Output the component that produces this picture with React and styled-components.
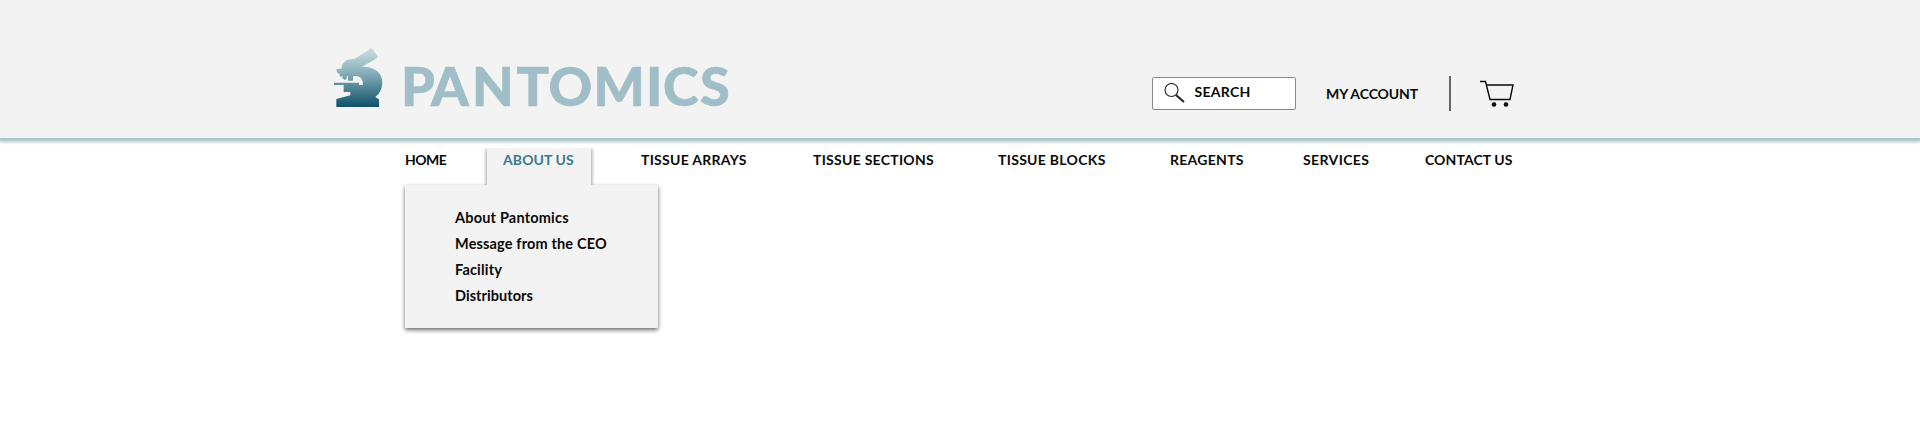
import React from "react";
import styled, { createGlobalStyle } from "styled-components";

const GlobalStyle = createGlobalStyle`
  body { margin: 0; min-height: 100vh; background: #fff; color: #0a0a0a; font-family: Lato, "Liberation Sans", sans-serif; font-size: 14px; font-weight: 700; }
  * { box-sizing: border-box; }
`;
const Header = styled.header`
  height: 138px;
  display: flex;
  align-items: flex-start;
  padding: 36px 0 0 320px;
  background: #f3f3f3;
  box-shadow: 0 2px 0 #a9c6cf, 0 3px 3px 1px #a9c6cf;
`;
const Logo = styled.svg`
  width: 420px;
  height: 80px;
  flex: none;
  overflow: visible;
`;
const Wordmark = styled.text`
  font: 900 54px Lato, sans-serif;
  fill: #a0bec8;
  stroke: #a0bec8;
  stroke-width: 0.6px;
`;
const Label = styled.span`
  display: block;
  white-space: nowrap;
  line-height: 18px;
  letter-spacing: ${(p) => p.$track || 0}px;
`;
const SearchBox = styled.div`
  width: 144px;
  height: 33px;
  margin: 41px 0 0 412px;
  padding: 5px 0 0 11px;
  display: flex;
  gap: 8.5px;
  border: 1px solid #8b8b8b;
  border-radius: 2px;
  background: #fff;
`;
const Account = styled.a`
  width: 123px;
  margin: 49px 0 0 30px;
`;
const Divider = styled.div`
  width: 1.5px;
  height: 35px;
  margin-top: 40px;
  background: #666;
`;
const Cart = styled.svg`
  width: 35px;
  height: 28px;
  margin: 44px 0 0 29px;
`;
const Nav = styled.nav`
  display: flex;
  padding: 9px 0 0 405px;
`;
const NavItem = styled.a`
  flex: none;
  height: 38px;
  padding-top: 4px;
  width: ${(p) => p.$width}px;
`;
const ActiveItem = styled(NavItem)`
  margin-right: 50px;
  padding-left: 16px;
  color: #3b7a90;
  background: #f3f3f3;
  border-radius: 2px 2px 0 0;
  box-shadow: 0 1px 4px rgba(0, 0, 0, 0.55);
  clip-path: inset(1px -5px 0 -5px);
`;
const Submenu = styled.div`
  position: relative;
  width: 253px;
  height: 143px;
  margin-left: 405px;
  padding: 24px 0 0 50px;
  display: flex;
  flex-direction: column;
  gap: 8px;
  font-size: 14.5px;
  background: #f3f3f3;
  box-shadow: 0 2px 4px rgba(0, 0, 0, 0.6);
  border-radius: 1px;
  &::before {
    content: "";
    position: absolute;
    left: 82px;
    top: -2px;
    width: 104px;
    height: 4px;
    background: #f3f3f3;
  }
`;

const afterTabs = [
  ["TISSUE ARRAYS", 172, 0.27],
  ["TISSUE SECTIONS", 185, 0.27],
  ["TISSUE BLOCKS", 172, 0.3],
  ["REAGENTS", 133, 0.28],
  ["SERVICES", 122, 0.38],
  ["CONTACT US", 90, 0.08],
];
const links = [
  ["About Pantomics", 0.2],
  ["Message from the CEO", 0.15],
  ["Facility", 0.18],
  ["Distributors", 0.05],
];

export default function App() {
  return (
    <>
      <GlobalStyle />
      <Header>
        <Logo viewBox="0 0 420 80">
          <defs>
            <linearGradient id="scope" x1="0" y1="0" x2="0" y2="1">
              <stop offset="0" stopColor="#cfe0e4" />
              <stop offset=".38" stopColor="#8fb4be" />
              <stop offset="1" stopColor="#0e5268" />
            </linearGradient>
          </defs>
          <path
            transform="scale(.33333)"
            fill="url(#scope)"
            d="M153 36L160 41L174 64L166 70L161 73L125 92C153 91 187 103 187 139C187 158 178 175 166 183L177 190V213H49V189L91 178V168H71V147H42V140H117V147H129C129 132 123 119 105 120L99 121V134H84V121L81 119L79 130L75 132L66 126L69 121L60 122L58 113L51 109L49 99L64 98C65 80 80 67 103 69L145 43L148 40Z"
          />
          <Wordmark y="70" x="81 111 152 196.5 228.5 273.5 326 343 380">PANTOMICS</Wordmark>
        </Logo>
        <SearchBox>
          <svg width="22" height="22" viewBox="0 0 22 22" fill="none" stroke="#222">
            <circle cx="7.5" cy="7" r="6.5" strokeWidth="1.1" />
            <path d="M12 12L20 19" strokeWidth="2.1" />
          </svg>
          <Label $track={0.3}>SEARCH</Label>
        </SearchBox>
        <Account><Label $track={-0.1}>MY ACCOUNT</Label></Account>
        <Divider />
        <Cart viewBox="0 0 35 28" fill="none" stroke="#0a0a0a">
          <path d="M0 1.5H5.5L10 19.5H30L33 5H6.5" strokeWidth="1.4" />
          <circle cx="14" cy="24.5" r="2.3" fill="#0a0a0a" stroke="none" />
          <circle cx="26" cy="24.5" r="2.3" fill="#0a0a0a" stroke="none" />
        </Cart>
      </Header>
      <Nav>
        <NavItem $width={82}><Label $track={-0.5}>HOME</Label></NavItem>
        <ActiveItem $width={104}><Label $track={0.1}>ABOUT US</Label></ActiveItem>
        {afterTabs.map(([t, w, s]) => (
          <NavItem key={t} $width={w}><Label $track={s}>{t}</Label></NavItem>
        ))}
      </Nav>
      <Submenu>
        {links.map(([t, s]) => <Label key={t} $track={s}>{t}</Label>)}
      </Submenu>
    </>
  );
}
